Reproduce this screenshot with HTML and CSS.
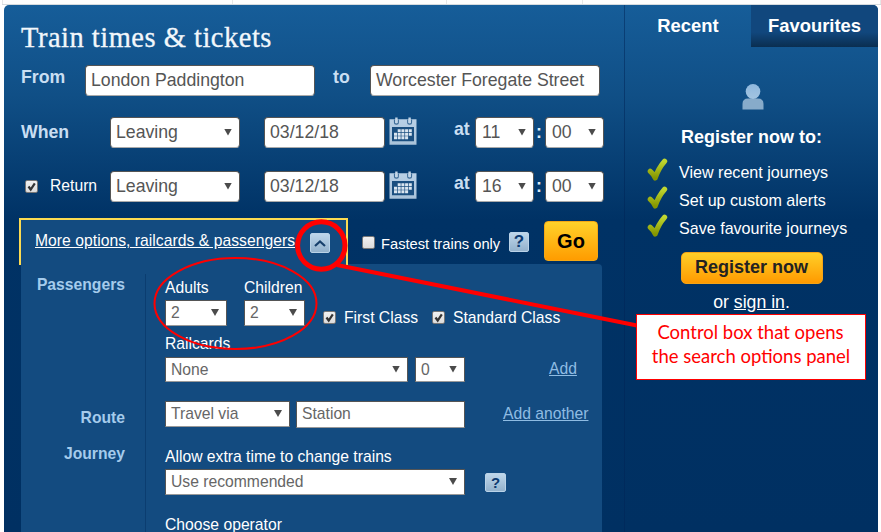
FILE: index.html
```
<!DOCTYPE html>
<html lang="en">
<head>
<meta charset="utf-8">
<title>Train times &amp; tickets</title>
<link rel="stylesheet" href="styles.css">
</head>
<body>
<svg class="defs" width="0" height="0" aria-hidden="true">
  <defs>
    <linearGradient id="tickFill" x1="0" y1="0" x2="0" y2="1">
      <stop offset="0" stop-color="#bfd630"/><stop offset="1" stop-color="#859600"/>
    </linearGradient>
    <linearGradient id="calFill" x1="0" y1="0" x2="0" y2="1">
      <stop offset="0" stop-color="#b9d0e6"/><stop offset="1" stop-color="#a9c2d9"/>
    </linearGradient>
    <linearGradient id="headFill" x1="0" y1="0" x2="0" y2="1">
      <stop offset="0" stop-color="#8fb8de"/><stop offset="1" stop-color="#a3c4e0"/>
    </linearGradient>
  </defs>
  <symbol id="calendar" viewBox="0 0 28 28">
    <path d="M.5 2.300h27v25.400H.5z" fill="url(#calFill)"/>
    <path d="M3 10h22v14.300H3z" fill="#1b4f80"/>
    <path d="M5.500 2.500v2.800q0 1.900 1.900 1.900t1.900-1.900V2.500M18.700 2.500v2.800q0 1.900 1.900 1.900t1.900-1.900V2.500" fill="none" stroke="#3d6c98" stroke-width="1.200"/>
    <path d="M7.400 .5v5.500M20.600 .5v5.500" stroke="#c3d6e8" stroke-width="2.400"/>
    <path d="M8.700 13.600H23M5 17.200h18M5 20.800h14.500" stroke="#dbe6f0" stroke-width="2.900" stroke-dasharray="3 0.700"/>
  </symbol>
  <symbol id="tick" viewBox="0 0 22 26">
    <path d="M4.300 15.300Q7 17.300 9.200 22Q12.300 12.500 18.600 5.300" fill="none" stroke="url(#tickFill)" stroke-width="5.200" stroke-linecap="round" stroke-linejoin="round"/>
  </symbol>
  <symbol id="check" viewBox="0 0 13 13">
    <path d="M3.500 6.500l2.200 3L9.800 3.300" fill="none" stroke="#333" stroke-width="2.200"/>
  </symbol>
</svg>

<div class="strip"><i></i><i></i><i></i><i></i></div>
<div class="widget">
  <main class="search">
    <h1>Train times &amp; tickets</h1>

    <div class="row row-from">
      <b class="lbl lbl-first lift">From</b>
      <span class="field w-station">London Paddington</span>
      <b class="lbl lbl-to lift">to</b>
      <span class="field w-station">Worcester Foregate Street</span>
    </div>

    <div class="row row-out">
      <b class="lbl lbl-when">When</b>
      <span class="field select w-mode">Leaving</span>
      <span class="field w-date">03/12/18</span>
      <svg class="cal" width="28" height="28"><use href="#calendar"/></svg>
      <b class="lbl lbl-at lift">at</b>
      <span class="field select w-time">11</span>
      <b class="colon">:</b>
      <span class="field select w-time">00</span>
    </div>

    <div class="row row-ret">
      <div class="return"><span class="box"><svg width="13" height="13"><use href="#check"/></svg></span><span>Return</span></div>
      <span class="field select w-mode">Leaving</span>
      <span class="field w-date">03/12/18</span>
      <svg class="cal" width="28" height="28"><use href="#calendar"/></svg>
      <b class="lbl lbl-at lift">at</b>
      <span class="field select w-time">16</span>
      <b class="colon">:</b>
      <span class="field select w-time">00</span>
    </div>

    <div class="options-bar">
      <div class="tab">
        <a class="more">More options, railcards &amp; passengers</a>
        <span class="icon-btn"><svg width="20" height="20" viewBox="0 0 20 20"><path d="M5 13l5-4.500 5 4.500" fill="none" stroke="#17406c" stroke-width="2.200"/></svg></span>
      </div>
      <span class="box box-fast"></span>
      <span class="fast">Fastest trains only</span>
      <span class="icon-btn help">?</span>
      <span class="go">Go</span>
    </div>

    <div class="panel">
      <div class="side-label">Passengers</div>
      <div class="group group-pass">
        <div class="line people">
          <div class="stack adults"><span class="cap">Adults</span><span class="sfield select">2</span></div>
          <div class="stack children"><span class="cap">Children</span><span class="sfield select">2</span></div>
          <span class="box cls1"><svg width="13" height="13"><use href="#check"/></svg></span><span class="cls-text t1">First Class</span>
          <span class="box cls2"><svg width="13" height="13"><use href="#check"/></svg></span><span class="cls-text t2">Standard Class</span>
        </div>
        <span class="cap cap-rail">Railcards</span>
        <div class="line rail">
          <span class="sfield select s-card">None</span>
          <span class="sfield select s-count">0</span>
          <a class="add add-card">Add</a>
        </div>
      </div>

      <div class="side-label label-route">Route</div>
      <div class="group group-route">
        <div class="line">
          <span class="sfield select s-via">Travel via</span>
          <span class="sfield s-station">Station</span>
          <a class="add add-via">Add another</a>
        </div>
      </div>

      <div class="side-label label-journey">Journey</div>
      <div class="group group-journey">
        <span class="cap">Allow extra time to change trains</span>
        <div class="line extra">
          <span class="sfield select s-extra">Use recommended</span>
          <span class="icon-btn help help-sm">?</span>
        </div>
        <span class="cap cap-op">Choose operator</span>
      </div>
    </div>
  </main>

  <aside class="account">
    <div class="tabs"><b>Recent</b><b class="off">Favourites</b></div>
    <svg class="person" width="22" height="26" viewBox="0 0 22 26">
      <path d="M.5 25.500V20q0-5.500 5.500-5.500h10q5.500 0 5.500 5.500v5.500z" fill="#87abca"/>
      <ellipse cx="11" cy="7.500" rx="7.300" ry="7.500" fill="url(#headFill)"/>
    </svg>
    <h2>Register now to:</h2>
    <ul>
      <li><svg width="22" height="26"><use href="#tick"/></svg><span>View recent journeys</span></li>
      <li><svg width="22" height="26"><use href="#tick"/></svg><span>Set up custom alerts</span></li>
      <li><svg width="22" height="26"><use href="#tick"/></svg><span>Save favourite journeys</span></li>
    </ul>
    <span class="register">Register now</span>
    <p class="signin">or <a>sign in</a>.</p>
  </aside>
</div>

<svg class="marks" width="881" height="532" viewBox="0 0 881 532" fill="none" stroke="#f00">
  <ellipse cx="235.500" cy="303.500" rx="81" ry="45.500" stroke-width="2"/>
  <circle cx="321.300" cy="245.500" r="23.700" stroke-width="5"/>
  <path d="M337 265L637 325.500" stroke-width="4"/>
</svg>
<div class="callout">Control box that opens<br>the search options panel</div>
</body>
</html>
```

FILE: styles.css
```
* { box-sizing: border-box; }
body {
  position: relative;
  margin: 0;
  width: 881px;
  height: 532px;
  overflow: hidden;
  background: #fff;
  font: 15.7px/18px "Liberation Sans", Arial, sans-serif;
  color: #fff;
}
h1, h2, ul, p { margin: 0; padding: 0; font-weight: normal; }
.defs { position: absolute; }
.strip {
  display: grid;
  grid-template-columns: 231px 214px 136px 1fr;
  margin-left: 2px;
  height: 5px;
  background: #fdfdfd;
  border-bottom: 1px solid #d5dade;
}
.strip i { border-right: 1px solid #e6e6e6; }
.strip i:first-child { border-left: 1px solid #e6e6e6; }

.widget {
  display: flex;
  width: 874px;
  height: 527px;
  margin-left: 4px;
  border-radius: 5px 5px 0 0;
  overflow: hidden;
  background: linear-gradient(#165d99 0, #104f86 90px, #003265 215px, #003062 100%);
}
.search { width: 621px; flex: none; border-right: 1px solid rgba(0, 35, 85, .5); }
h1 {
  padding: 15px 0 0 17px;
  height: 60px;
  font: 28.5px/36px "Liberation Serif", serif;
  letter-spacing: .5px;
  color: #f2f7fb;
  -webkit-text-stroke: .3px #f2f7fb;
  white-space: nowrap;
}

.row { display: flex; height: 31px; font-size: 17.7px; align-items: flex-start; }
.row-out { margin-top: 21px; }
.row-ret { margin-top: 23px; }
.lbl { line-height: 20px; padding-top: 5px; color: #c9def2; flex: none; }
.lift { padding-top: 2px; }
.lbl-first { width: 81px; padding-left: 17px; }
.lbl-to { width: 55px; padding-left: 18px; }
.lbl-when { width: 106px; padding-left: 17px; }
.lbl-at { margin-left: 37px; width: 21px; }
.colon { width: 11px; padding: 5px 0 0 2px; line-height: 20px; color: #dcebf8; flex: none; }
.field {
  position: relative;
  flex: none;
  height: 31px;
  padding-left: 5px;
  line-height: 28px;
  background: #fff;
  border: 1px solid #555;
  border-bottom-color: #aaa;
  border-radius: 4px;
  color: #555;
  white-space: nowrap;
}
.w-station { width: 230px; }
.w-mode { width: 130px; margin-right: 24px; }
.w-date { width: 121px; }
.w-time { width: 59px; padding-left: 6px; }
.cal { margin: 0 0 0 4px; flex: none; }
.select::after {
  content: "";
  position: absolute;
  right: 7px;
  top: 50%;
  margin-top: -4px;
  border: 3.5px solid transparent;
  border-top: 7px solid #4b4b4b;
  border-bottom: 0;
}
.select::after { width: 8px; height: 7px; border: 0; background: #4b4b4b; clip-path: polygon(0 0, 100% 0, 50% 100%); }
.return { display: flex; width: 106px; padding: 6px 0 0 21px; font-size: 15.7px; }
.return .box { margin: 3px 12px 0 0; }
.box {
  display: block;
  width: 13px;
  height: 13px;
  flex: none;
  background: linear-gradient(#f1f1f1, #dcdcdc);
  border: 1px solid #777;
  border-radius: 2px;
}
.box svg { display: block; margin: -1px; }

.options-bar { display: flex; height: 47px; margin: 16px 0 0 15px; }
.tab {
  display: flex;
  width: 329px;
  height: 47px;
  flex: none;
  padding: 12px 0 0 14px;
  background: #134b80;
  border: 2px solid #fcdb52;
  border-bottom: 0;
}
.more { width: 275px; text-decoration: underline; white-space: nowrap; letter-spacing: .03px; }
.icon-btn {
  display: block;
  width: 20px;
  height: 20px;
  flex: none;
  margin-top: 1px;
  border: 1px solid #bad3e8;
  border-radius: 2px;
  background: linear-gradient(#bed6ea, #93b2cd);
  color: #0b3970;
  text-align: center;
}
.icon-btn svg { display: block; margin: -1px; }
.help { margin: 14px 0 0 9px; font: bold 17px/18px "Liberation Sans", sans-serif; }
.box-fast { margin: 18px 0 0 14px; }
.fast { margin: 17px 0 0 6px; width: 119px; font-size: 14.7px; white-space: nowrap; }
.go {
  margin: 3px 0 0 15px;
  width: 54px;
  height: 40px;
  border-radius: 4px;
  background: linear-gradient(#ffd22a, #ff9c00);
  border: 1px solid #f5a814;
  color: #000;
  font: bold 20px/38px "Liberation Sans", sans-serif;
  text-align: center;
}

.panel {
  display: grid;
  grid-template-columns: 125px 1fr;
  grid-template-rows: 122px 47px 90px;
  width: 581px;
  height: 269px;
  margin: -1px 0 0 17px;
  padding-top: 10px;
  border-radius: 0 4px 0 0;
  background: #134b80;
}
.side-label {
  padding: 2px 20px 0 0;
  border-right: 1px solid #0b3d70;
  color: #a5cbec;
  font-weight: bold;
  text-align: right;
}
.label-route { padding-top: 13px; }
.label-journey { padding-top: 2px; }
.group { padding-left: 19px; }
.line { display: flex; align-items: flex-start; }
.stack, .cap { display: block; white-space: nowrap; }
.group-pass { padding-top: 5px; }
.adults { width: 62px; }
.children { width: 61px; margin-left: 17px; }
.stack .cap { height: 21px; }
.sfield {
  display: block;
  position: relative;
  height: 26px;
  flex: none;
  padding-left: 5px;
  border: 1px solid #555;
  border-bottom-color: #999;
  background: #fff;
  color: #666;
  line-height: 24px;
  white-space: nowrap;
}
.cls1 { margin: 32px 0 0 18px; }
.cls2 { margin: 32px 0 0 14px; }
.cls-text { margin-top: 30px; white-space: nowrap; }
.t1 { margin-left: 8px; width: 74px; }
.t2 { margin-left: 8px; }
.cap-rail { margin-top: 8px; }
.rail { margin-top: 4px; }
.s-card { width: 243px; height: 25px; }
.s-count { width: 50px; height: 25px; margin-left: 7px; }
.add { color: #8fbce3; text-decoration: underline; white-space: nowrap; }
.add-card { margin: 3px 0 0 84px; }
.group-route { padding-top: 5px; }
.s-via { width: 125px; }
.s-station { width: 169px; height: 27px; margin-left: 6px; }
.add-via { margin: 4px 0 0 38px; }
.group-journey { padding-top: 5px; }
.extra { margin-top: 3px; }
.s-extra { width: 300px; }
.help-sm { margin: 4px 0 0 20px; width: 21px; height: 19px; font-size: 15px; line-height: 17px; }
.cap-op { margin-top: 21px; }

.account { width: 253px; display: flex; flex-direction: column; align-items: center; }
.tabs { display: flex; width: 253px; font-size: 18.400px; line-height: 42px; text-align: center; }
.tabs b { width: 126px; height: 42px; }
.tabs .off { width: 127px; background: linear-gradient(#11477d 0, #11477d 65%, #0a2e50 100%); }
.person { margin: 37px 0 0 2px; }
h2 { margin-top: 17px; font-size: 18px; font-weight: bold; line-height: 20px; }
ul { list-style: none; width: 253px; padding-left: 21px; margin-top: 9px; }
li { display: flex; height: 28px; font-size: 16.1px; white-space: nowrap; }
li svg { flex: none; margin-right: 11px; }
li span { padding-top: 7px; }
.register {
  margin-top: 12px;
  width: 142px;
  height: 32px;
  border-radius: 5px;
  border: 1px solid #f5a416;
  background: linear-gradient(#ffcf28, #ff9a00);
  color: #222;
  font: bold 18px/28px "Liberation Sans", sans-serif;
  text-align: center;
}
.signin { margin-top: 8px; font-size: 17.700px; line-height: 20px; }
.signin a { text-decoration: underline; }

.marks { position: absolute; left: 0; top: 0; }
.callout {
  position: absolute;
  left: 636px;
  top: 314px;
  width: 230px;
  height: 66px;
  padding-top: 5px;
  border: 1px solid #f00;
  background: #fff;
  color: #f00;
  font: 18.500px/24px Lato, sans-serif;
  text-align: center;
  text-indent: -1px;
  white-space: nowrap;
}
```
